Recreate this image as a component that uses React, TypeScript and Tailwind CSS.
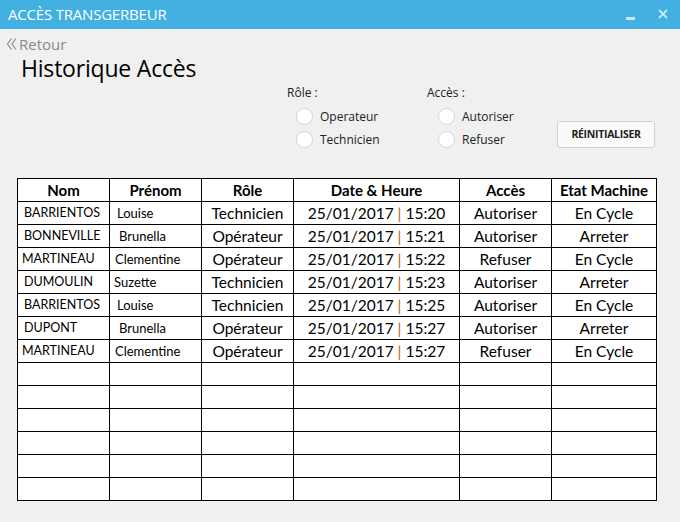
import { useState } from 'react'

type Row = {
  nom: string
  prenom: string
  role: string
  date: string
  heure: string
  acces: string
  etat: string
  nomPad: string
  prenomPad: string
}

const rows: Row[] = [
  { nom: 'BARRIENTOS', prenom: 'Louise', role: 'Technicien', date: '25/01/2017', heure: '15:20', acces: 'Autoriser', etat: 'En Cycle', nomPad: 'pl-[6px]', prenomPad: 'pl-[7px]' },
  { nom: 'BONNEVILLE', prenom: 'Brunella', role: 'Opérateur', date: '25/01/2017', heure: '15:21', acces: 'Autoriser', etat: 'Arreter', nomPad: 'pl-[6px]', prenomPad: 'pl-[9px]' },
  { nom: 'MARTINEAU', prenom: 'Clementine', role: 'Opérateur', date: '25/01/2017', heure: '15:22', acces: 'Refuser', etat: 'En Cycle', nomPad: 'pl-[4px]', prenomPad: 'pl-[5px]' },
  { nom: 'DUMOULIN', prenom: 'Suzette', role: 'Technicien', date: '25/01/2017', heure: '15:23', acces: 'Autoriser', etat: 'Arreter', nomPad: 'pl-[6px]', prenomPad: 'pl-[4px]' },
  { nom: 'BARRIENTOS', prenom: 'Louise', role: 'Technicien', date: '25/01/2017', heure: '15:25', acces: 'Autoriser', etat: 'En Cycle', nomPad: 'pl-[6px]', prenomPad: 'pl-[7px]' },
  { nom: 'DUPONT', prenom: 'Brunella', role: 'Opérateur', date: '25/01/2017', heure: '15:27', acces: 'Autoriser', etat: 'Arreter', nomPad: 'pl-[6px]', prenomPad: 'pl-[9px]' },
  { nom: 'MARTINEAU', prenom: 'Clementine', role: 'Opérateur', date: '25/01/2017', heure: '15:27', acces: 'Refuser', etat: 'En Cycle', nomPad: 'pl-[4px]', prenomPad: 'pl-[5px]' },
]

const cell = 'border border-black h-[23px] p-0 leading-none'

function Radio({ label, checked, onClick }: { label: string; checked: boolean; onClick: () => void }) {
  return (
    <button onClick={onClick} className="flex items-center gap-[7px] h-[23px] text-[12px] text-[#222]">
      <span className="w-[17px] h-[17px] rounded-full bg-white border border-[#d4d4d4] flex items-center justify-center">
        {checked && <span className="w-[7px] h-[7px] rounded-full bg-[#333]" />}
      </span>
      {label}
    </button>
  )
}

export default function App() {
  const [role, setRole] = useState<string | null>(null)
  const [acces, setAcces] = useState<string | null>(null)

  return (
    <div className="w-[680px] h-[522px] bg-[#f0f0f0] flex flex-col overflow-hidden" style={{ fontFamily: '"Open Sans", "Noto Sans", sans-serif' }}>
      {/* Title bar */}
      <div className="h-[29px] bg-[#42b0e1] flex items-center justify-between pl-[8px] pr-[12px] shrink-0">
        <span className="text-white text-[15px] tracking-[-0.2px]">ACCÈS TRANSGERBEUR</span>
        <div className="flex items-center gap-[23px]">
          <span className="w-[9px] h-[3px] bg-[#c7e8f7] mt-[8px]" />
          <svg width="10" height="10" viewBox="0 0 10 10" className="mt-[-2px]">
            <path d="M1 1 L9 9 M9 1 L1 9" stroke="#c7e8f7" strokeWidth="1.8" />
          </svg>
        </div>
      </div>

      {/* Header */}
      <div className="flex items-center pl-[6px] pt-[6px] text-[#8a8a8a] text-[15px] leading-[18px]">
        <svg width="11" height="14" viewBox="0 0 11 14" className="mr-[2px]">
          <path d="M5.5 1.5 L1.5 7 L5.5 12.5 M10 1.5 L6 7 L10 12.5" stroke="#8a8a8a" strokeWidth="1.2" fill="none" />
        </svg>
        Retour
      </div>
      <h1 className="pl-[21px] text-[23px] leading-[28px] text-black mt-[1px] tracking-[-0.2px]">Historique Accès</h1>

      {/* Filters */}
      <div className="flex mt-[3px] h-[64px]">
        <div className="w-[287px]" />
        <div className="w-[140px] flex flex-col">
          <span className="text-[12px] text-[#222] leading-[16px]">Rôle :</span>
          <div className="pl-[9px] mt-[4px]">
            <Radio label="Operateur" checked={role === 'op'} onClick={() => setRole('op')} />
            <Radio label="Technicien" checked={role === 'tech'} onClick={() => setRole('tech')} />
          </div>
        </div>
        <div className="w-[130px] flex flex-col">
          <span className="text-[12px] text-[#222] leading-[16px]">Accès :</span>
          <div className="pl-[11px] mt-[4px]">
            <Radio label="Autoriser" checked={acces === 'ok'} onClick={() => setAcces('ok')} />
            <Radio label="Refuser" checked={acces === 'no'} onClick={() => setAcces('no')} />
          </div>
        </div>
        <div className="flex flex-col pt-[36px]">
          <button
            onClick={() => { setRole(null); setAcces(null) }}
            className="w-[98px] h-[27px] rounded-[3px] border border-[#d0d0d0] bg-[#fafafa] text-[10.5px] font-bold text-[#222] tracking-[-0.3px]"
          >
            RÉINITIALISER
          </button>
        </div>
      </div>

      {/* Table */}
      <div className="pl-[17px] mt-[29px]" style={{ fontFamily: '"Lato", "Open Sans", sans-serif' }}>
        <table className="border-collapse table-fixed w-[639px] text-black bg-white">
          <colgroup>
            <col className="w-[92px]" />
            <col className="w-[92px]" />
            <col className="w-[92px]" />
            <col className="w-[166px]" />
            <col className="w-[92px]" />
            <col className="w-[105px]" />
          </colgroup>
          <thead>
            <tr className="text-[15px] font-bold">
              <th className={cell}>Nom</th>
              <th className={cell}>Prénom</th>
              <th className={cell}>Rôle</th>
              <th className={cell}>Date &amp; Heure</th>
              <th className={cell}>Accès</th>
              <th className={cell}>Etat Machine</th>
            </tr>
          </thead>
          <tbody>
            {rows.map((r, i) => (
              <tr key={i}>
                <td className={`${cell} ${r.nomPad} text-[12.5px] text-left`}>{r.nom}</td>
                <td className={`${cell} ${r.prenomPad} text-[13px] text-left`}>{r.prenom}</td>
                <td className={`${cell} text-[15.5px] text-center pt-[2px]`}>{r.role}</td>
                <td className={`${cell} text-[15.5px] text-center pt-[2px]`}>
                  {r.date} <span className="text-[#b5621a]">|</span> {r.heure}
                </td>
                <td className={`${cell} text-[15.5px] text-center pt-[2px]`}>{r.acces}</td>
                <td className={`${cell} text-[15.5px] text-center pt-[2px]`}>{r.etat}</td>
              </tr>
            ))}
            {Array.from({ length: 6 }).map((_, i) => (
              <tr key={`e${i}`}>
                {Array.from({ length: 6 }).map((__, j) => (
                  <td key={j} className={cell} />
                ))}
              </tr>
            ))}
          </tbody>
        </table>
      </div>
    </div>
  )
}
